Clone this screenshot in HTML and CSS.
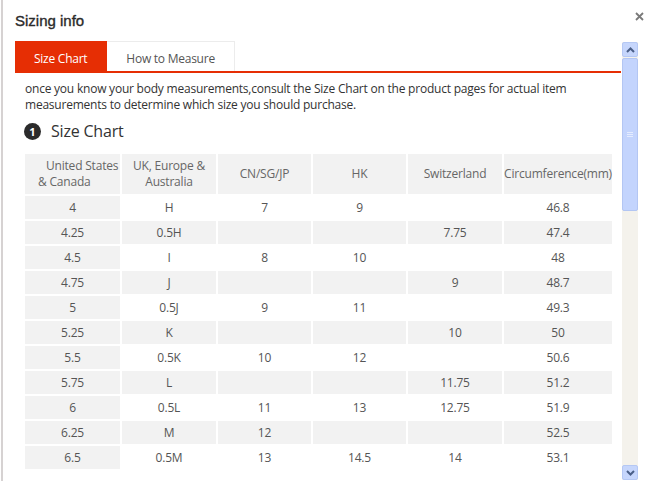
FILE: index.html
```html
<!DOCTYPE html>
<html>
<head>
<meta charset="utf-8">
<link rel="stylesheet" href="styles.css">
</head>
<body>
<div class="dialog">
  <div class="top">
    <h1 class="title">Sizing info</h1>
    <svg class="close" width="9" height="9" viewBox="0 0 9 9"><path d="M1 1L8 8M8 1L1 8" stroke="#7a7a7a" stroke-width="1.8" fill="none"/></svg>
  </div>
  <div class="panel">
    <div class="pane">
      <div class="tabs">
        <div class="tab active">Size Chart</div>
        <div class="tab">How to Measure</div>
      </div>
      <div class="body">
        <p class="intro">once you know your body measurements,consult the Size Chart on the product pages for actual item measurements to determine which size you should purchase.</p>
        <div class="heading"><span class="num">1</span><span class="htext">Size Chart</span></div>
        <table class="chart">
          <colgroup>
            <col class="c1"><col class="c2"><col class="c3"><col class="c4"><col class="c5"><col class="c6">
          </colgroup>
          <thead>
            <tr>
              <th class="first">United States<br>&amp; Canada</th>
              <th>UK, Europe &amp; Australia</th>
              <th>CN/SG/JP</th>
              <th>HK</th>
              <th>Switzerland</th>
              <th>Circumference(mm)</th>
            </tr>
          </thead>
          <tbody>
            <tr><td>4</td><td>H</td><td>7</td><td>9</td><td></td><td>46.8</td></tr>
            <tr class="alt"><td>4.25</td><td>0.5H</td><td></td><td></td><td>7.75</td><td>47.4</td></tr>
            <tr><td>4.5</td><td>I</td><td>8</td><td>10</td><td></td><td>48</td></tr>
            <tr class="alt"><td>4.75</td><td>J</td><td></td><td></td><td>9</td><td>48.7</td></tr>
            <tr><td>5</td><td>0.5J</td><td>9</td><td>11</td><td></td><td>49.3</td></tr>
            <tr class="alt"><td>5.25</td><td>K</td><td></td><td></td><td>10</td><td>50</td></tr>
            <tr><td>5.5</td><td>0.5K</td><td>10</td><td>12</td><td></td><td>50.6</td></tr>
            <tr class="alt"><td>5.75</td><td>L</td><td></td><td></td><td>11.75</td><td>51.2</td></tr>
            <tr><td>6</td><td>0.5L</td><td>11</td><td>13</td><td>12.75</td><td>51.9</td></tr>
            <tr class="alt"><td>6.25</td><td>M</td><td>12</td><td></td><td></td><td>52.5</td></tr>
            <tr><td>6.5</td><td>0.5M</td><td>13</td><td>14.5</td><td>14</td><td>53.1</td></tr>
          </tbody>
        </table>
      </div>
    </div>
    <div class="scrollbar">
      <div class="sbtn"><svg width="9" height="6" viewBox="0 0 9 6"><path d="M1 5L4.5 1.5L8 5" stroke="#4a5f88" stroke-width="2" fill="none"/></svg></div>
      <div class="thumb"><span class="grip"></span></div>
      <div class="track"></div>
      <div class="sbtn"><svg width="9" height="6" viewBox="0 0 9 6"><path d="M1 1L4.5 4.5L8 1" stroke="#4a5f88" stroke-width="2" fill="none"/></svg></div>
    </div>
  </div>
</div>
</body>
</html>
```
FILE: styles.css
```css
html, body {
  margin: 0;
  padding: 0;
  background: #fff;
}
body {
  font-family: "Open Sans", "Liberation Sans", sans-serif;
  color: #333;
  overflow: hidden;
}
.dialog {
  margin-left: 1px;
  border-left: 2px solid #d6d2d2;
  padding-left: 12px;
  height: 481px;
  box-sizing: border-box;
}
.top {
  display: flex;
  justify-content: space-between;
  align-items: flex-start;
  padding-top: 11px;
  height: 20px;
  margin-bottom: 10px;
}
.title {
  margin: 0;
  font-family: "Liberation Sans", Arial, sans-serif;
  font-size: 15px;
  font-weight: normal;
  line-height: 20px;
  color: #2a2a2a;
  -webkit-text-stroke: 0.35px #2a2a2a;
}
.close {
  margin-top: 1px;
  margin-right: 6px;
}
.panel {
  display: flex;
  width: 623px;
  height: 439px;
}
.pane {
  width: 606px;
  overflow: hidden;
  flex: none;
}
.tabs {
  display: flex;
  border-bottom: 2px solid #e62e04;
  height: 30px;
}
.tab {
  padding: 4px 19px 0;
  line-height: 26px;
  font-size: 12px;
  letter-spacing: -0.25px;
  color: #555;
  background: #fff;
  border-top: 1px solid #ececec;
  border-right: 1px solid #ececec;
  box-sizing: border-box;
  height: 30px;
}
.tab.active {
  background: #e62e04;
  color: #fff;
  border-color: #e62e04;
}
.body {
  padding: 8px 0 0 10px;
}
.intro {
  margin: 0;
  font-size: 12px;
  letter-spacing: -0.22px;
  line-height: 16px;
  color: #333;
}
.heading {
  display: flex;
  align-items: center;
  margin-top: 8px;
  height: 20px;
}
.num {
  width: 17px;
  height: 17px;
  border-radius: 50%;
  background: #2b2b2b;
  color: #fff;
  font-size: 11px;
  font-weight: 700;
  line-height: 17px;
  text-align: center;
  margin-left: -1px;
  margin-right: 10px;
}
.htext {
  font-size: 16px;
  letter-spacing: -0.2px;
  line-height: 20px;
  color: #333;
}
.chart {
  margin-top: 11px;
  margin-left: -2px;
  border-collapse: separate;
  border-spacing: 2px;
  table-layout: fixed;
  width: 591px;
  font-size: 12px;
  letter-spacing: -0.2px;
}
.c1 { width: 95px; }
.c2 { width: 94px; }
.c3 { width: 93px; }
.c4 { width: 93px; }
.c5 { width: 94px; }
.c6 { width: 108px; }
.chart th {
  background: #f2f2f2;
  color: #666;
  font-weight: normal;
  height: 40px;
  padding: 0;
  line-height: 16px;
  text-align: center;
}
.chart th.first {
  text-align: left;
  padding-left: 13px;
  text-indent: 8px;
  white-space: nowrap;
}
.chart td {
  height: 23px;
  padding: 0;
  text-align: center;
  color: #555;
  line-height: 16px;
}
.chart td:first-child,
.chart tr.alt td {
  background: #f2f2f2;
}
.scrollbar {
  width: 16px;
  margin-left: 1px;
  margin-top: 1px;
  display: flex;
  flex-direction: column;
  background: #f4f2ec;
}
.sbtn {
  height: 15px;
  flex: none;
  background: #c6d6fc;
  border: 1px solid #b5c8f4;
  box-sizing: border-box;
  border-radius: 2px;
  display: flex;
  align-items: center;
  justify-content: center;
}
.thumb {
  margin-top: 1px;
  height: 153px;
  flex: none;
  background: #c3d4fd;
  border: 1px solid #b3c6f3;
  box-sizing: border-box;
  border-radius: 2px;
  display: flex;
  align-items: center;
  justify-content: center;
}
.grip {
  width: 6px;
  height: 5px;
  border-top: 1px solid #e4ecff;
  border-bottom: 1px solid #e4ecff;
  box-sizing: border-box;
  background: linear-gradient(#e4ecff, #e4ecff) center / 6px 1px no-repeat;
}
.track {
  flex: 1;
}
```
